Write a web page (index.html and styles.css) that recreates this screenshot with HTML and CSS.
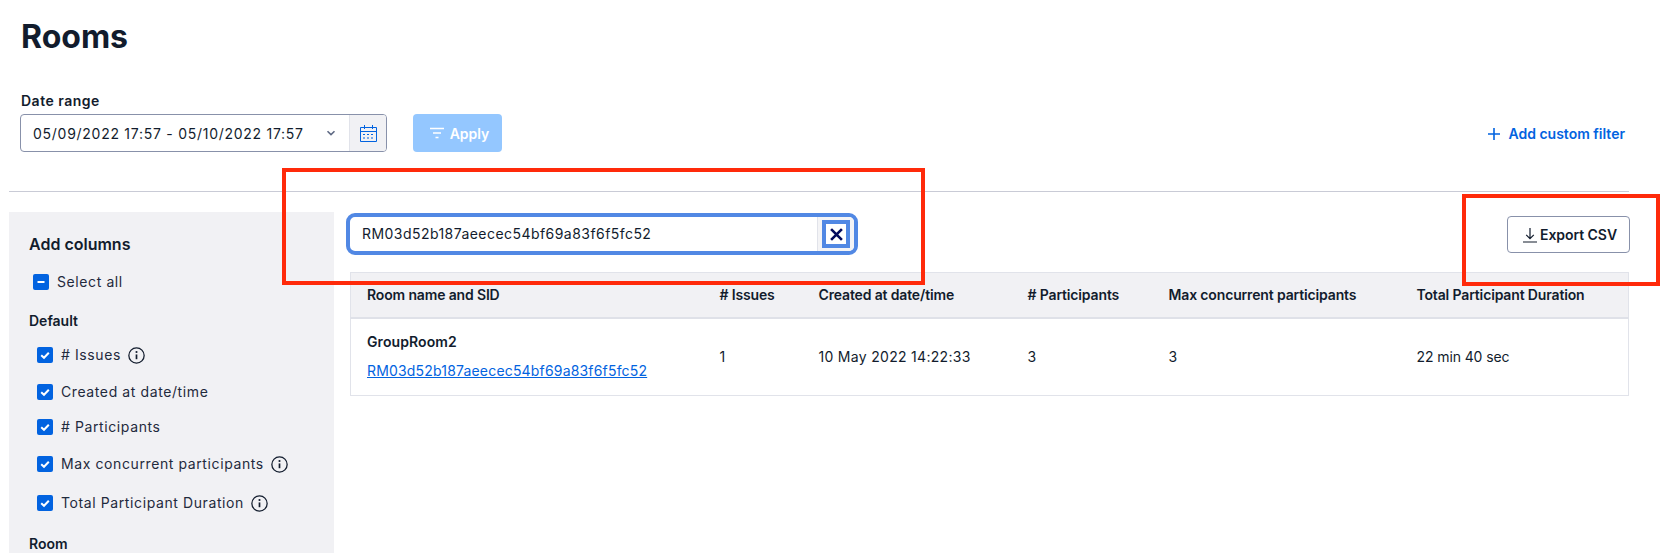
FILE: index.html
```html
<!DOCTYPE html>
<html lang="en">
<head>
<meta charset="utf-8">
<title>Rooms</title>
<link rel="stylesheet" href="styles.css">
</head>
<body>
<header class="head">
  <h1 class="title">Rooms</h1>
  <div class="filters">
    <div class="date-field">
      <label class="date-label">Date range</label>
      <div class="date-row">
        <div class="date-group">
          <div class="date-value">
            <span>05/09/2022 17:57 - 05/10/2022 17:57</span>
            <svg class="chev" width="10" height="6" viewBox="0 0 10 6"><path d="M1.5 1.2 5 4.6l3.5-3.4" fill="none" stroke="#606b85" stroke-width="1.6"/></svg>
          </div>
          <div class="date-cal">
            <svg width="17" height="18" viewBox="0 0 17 18" fill="none" stroke="#0263e0"><path d="M.5 3.5h16v14H.5zM.5 7.5h16M4.5 1v4M12.5 1v4"/><path stroke-dasharray="2 2" d="M3 10.5h11M3 14h11"/></svg>
          </div>
        </div>
        <button class="apply">
          <svg width="14" height="12" viewBox="0 0 14 12" fill="none" stroke="#fff" stroke-width="1.6"><path d="M0 1.5h14M3 6h8M5.5 10.5h3"/></svg>
          Apply
        </button>
      </div>
    </div>
    <a class="add-filter"><svg width="12" height="12" viewBox="0 0 12 12" fill="none" stroke="#0263e0" stroke-width="1.6"><path d="M6 0v12M0 6h12"/></svg>Add custom filter</a>
  </div>
</header>
<hr class="divider">
<main class="layout">
  <aside class="side">
    <h2 class="side-title">Add columns</h2>
    <div class="check all"><span class="box"><svg width="10" height="10" viewBox="0 0 10 10"><path d="M1.5 5h7" stroke="#fff" stroke-width="2"/></svg></span>Select all</div>
    <h3 class="group">Default</h3>
    <div class="check c1"><span class="box"><svg width="10" height="10" viewBox="0 0 10 10" fill="none"><path d="M1.2 5.2 4 7.8l4.8-5" stroke="#fff" stroke-width="2"/></svg></span># Issues<svg class="info" width="17" height="17" viewBox="0 0 16 16" fill="none" stroke="#121c2d"><circle cx="8" cy="8" r="7.2" stroke-width="1.2"/><path d="M8 7v4.5" stroke-width="1.6"/><circle cx="8" cy="4.7" r="1" fill="#121c2d" stroke="none"/></svg></div>
    <div class="check c2"><span class="box"><svg width="10" height="10" viewBox="0 0 10 10" fill="none"><path d="M1.2 5.2 4 7.8l4.8-5" stroke="#fff" stroke-width="2"/></svg></span>Created at date/time</div>
    <div class="check c3"><span class="box"><svg width="10" height="10" viewBox="0 0 10 10" fill="none"><path d="M1.2 5.2 4 7.8l4.8-5" stroke="#fff" stroke-width="2"/></svg></span># Participants</div>
    <div class="check c4"><span class="box"><svg width="10" height="10" viewBox="0 0 10 10" fill="none"><path d="M1.2 5.2 4 7.8l4.8-5" stroke="#fff" stroke-width="2"/></svg></span>Max concurrent participants<svg class="info" width="17" height="17" viewBox="0 0 16 16" fill="none" stroke="#121c2d"><circle cx="8" cy="8" r="7.2" stroke-width="1.2"/><path d="M8 7v4.5" stroke-width="1.6"/><circle cx="8" cy="4.7" r="1" fill="#121c2d" stroke="none"/></svg></div>
    <div class="check c5"><span class="box"><svg width="10" height="10" viewBox="0 0 10 10" fill="none"><path d="M1.2 5.2 4 7.8l4.8-5" stroke="#fff" stroke-width="2"/></svg></span>Total Participant Duration<svg class="info" width="17" height="17" viewBox="0 0 16 16" fill="none" stroke="#121c2d"><circle cx="8" cy="8" r="7.2" stroke-width="1.2"/><path d="M8 7v4.5" stroke-width="1.6"/><circle cx="8" cy="4.7" r="1" fill="#121c2d" stroke="none"/></svg></div>
    <h3 class="group room">Room</h3>
  </aside>
  <section class="content">
    <div class="toolbar">
      <div class="search">
        <span class="search-text">RM03d52b187aeecec54bf69a83f6f5fc52</span>
        <span class="clear-cell"><span class="clear"><svg width="13" height="13" viewBox="0 0 12 12" fill="none" stroke="#030b5d" stroke-width="2.4"><path d="M1 1l10 10M11 1 1 11"/></svg></span></span>
      </div>
      <button class="export"><svg width="14" height="16" viewBox="0 0 14 16" fill="none" stroke="#121c2d" stroke-width="1.2"><path d="M7 1v10.5M3.2 7.8 7 11.6l3.8-3.8M0 15h14"/></svg>Export CSV</button>
    </div>
    <table class="grid">
      <thead>
        <tr><th class="w1">Room name and SID</th><th class="w2"># Issues</th><th class="w3">Created at date/time</th><th class="w4"># Participants</th><th class="w5">Max concurrent participants</th><th>Total Participant Duration</th></tr>
      </thead>
      <tbody>
        <tr>
          <td><div class="room-name">GroupRoom2</div><a class="sid">RM03d52b187aeecec54bf69a83f6f5fc52</a></td>
          <td>1</td><td>10 May 2022 14:22:33</td><td>3</td><td>3</td><td class="dur">22 min 40 sec</td>
        </tr>
      </tbody>
    </table>
  </section>
</main>
<div class="mark mark-search"></div>
<div class="mark mark-export"></div>
</body>
</html>
```
FILE: styles.css
```css
* { box-sizing: border-box; }
html, body { margin: 0; height: 553px; overflow: hidden; background: #fff; }
body { font-family: Inter, "Liberation Sans", sans-serif; color: #121c2d; font-size: 14px; position: relative; }
.head { padding: 0 45px 0 21px; height: 191px; }
.title { margin: 0; padding-top: 17px; font-size: 32px; line-height: 40px; font-weight: 700; height: 92px; }
.filters { display: flex; justify-content: space-between; align-items: flex-end; margin-left: -1px; }
.date-label { display: block; font-size: 14px; line-height: 18px; font-weight: 600; letter-spacing: .5px; margin: 0 0 4px 1px; }
.date-row { display: flex; gap: 26px; }
.date-group { display: flex; width: 367px; height: 38px; border: 1px solid #8891aa; border-radius: 4px; overflow: hidden; }
.date-value { flex: 1; display: flex; justify-content: space-between; align-items: center; padding: 0 13px 0 12px; font-size: 14px; letter-spacing: .73px; }
.date-cal { width: 37px; background: #f1f1f4; border-left: 1px solid #e1e3ea; display: flex; align-items: center; justify-content: center; }
.apply { width: 89px; height: 38px; border: 0; border-radius: 4px; background: #94c7ff; color: #fff; font: 600 14px Inter, sans-serif; display: flex; align-items: center; justify-content: center; gap: 6px; padding: 0 0 0 4px; }
.add-filter { display: flex; align-items: center; gap: 8px; color: #0263e0; font-weight: 600; font-size: 14px; line-height: 20px; margin-bottom: 8px; }
.divider { margin: 0 41px 0 9px; border: 0; border-top: 1px solid #c9cbd6; height: 1px; }
.layout { display: flex; margin-top: 20px; padding-left: 9px; }
.side { width: 325px; height: 341px; background: #f1f1f4; padding: 22px 20px 0; flex: none; }
.side-title { margin: 0; font-size: 16px; line-height: 20px; font-weight: 600; }
.check { display: flex; align-items: center; font-size: 14px; line-height: 18px; letter-spacing: .6px; color: #1f2a3d; }
.box { width: 16px; height: 16px; background: #0263e0; border-radius: 2px; display: flex; align-items: center; justify-content: center; flex: none; margin-right: 8px; }
.info { margin-left: 7px; }
.all { margin: 19px 0 0 4px; }
.group { margin: 0; font-size: 14px; line-height: 18px; font-weight: 600; }
.all + .group { margin-top: 21px; }
.c1 { margin: 16px 0 0 8px; }
.c2 { margin: 19px 0 0 8px; }
.c3 { margin: 17px 0 0 8px; }
.c4 { margin: 19px 0 0 8px; }
.c5 { margin: 21px 0 0 8px; }
.group.room { margin-top: 23px; }
.content { margin-left: 13px; width: 1283px; flex: none; }
.toolbar { display: flex; justify-content: space-between; align-items: flex-start; height: 60px; padding-top: 1px; }
.search { display: flex; width: 512px; height: 42px; margin-left: -1px; border: 4px solid #5188e4; border-radius: 9px; overflow: hidden; align-items: stretch; }
.search-text { flex: 1; padding-left: 12px; line-height: 34px; font-size: 14px; letter-spacing: .45px; }
.clear-cell { width: 37px; background: #f4f4f6; border-left: 1px solid #e1e3ea; display: flex; align-items: center; justify-content: flex-end; padding-right: 4px; }
.clear { width: 28px; height: 28px; border: 4px solid #5188e4; background: #fff; display: flex; align-items: center; justify-content: center; }
.export { width: 123px; height: 37px; margin-top: 3px; background: #fff; border: 1px solid #8891aa; border-radius: 4px; font: 600 14px Inter, sans-serif; letter-spacing: -.05px; color: #121c2d; display: flex; align-items: center; justify-content: center; gap: 3px; padding: 0 0 0 3px; }
.grid { margin-left: 3px; width: 1279px; border-collapse: collapse; table-layout: fixed; border: 1px solid #e1e3ea; }
.grid th { background: #f1f1f4; height: 45px; border-bottom: 2px solid #dfe1e8; text-align: left; font-weight: 600; font-size: 14px; letter-spacing: -.15px; padding: 0; }
.grid td { height: 78px; font-size: 14px; letter-spacing: .3px; padding: 0; }
.grid .dur { letter-spacing: -.1px; }
.grid th:first-child, .grid td:first-child { padding-left: 16px; }
.w1 { width: 369px; }
.w2 { width: 99px; }
.w3 { width: 209px; }
.w4 { width: 141px; }
.w5 { width: 248px; }
.room-name { font-weight: 600; line-height: 20px; margin-bottom: 9px; letter-spacing: .1px; }
.sid { color: #0263e0; text-decoration: underline; line-height: 20px; display: block; letter-spacing: .18px; }
.mark { position: absolute; border: 4px solid #ff2a0a; }
.mark-search { left: 282px; top: 168px; width: 643px; height: 117px; }
.mark-export { left: 1462px; top: 194px; width: 198px; height: 92px; }
```
